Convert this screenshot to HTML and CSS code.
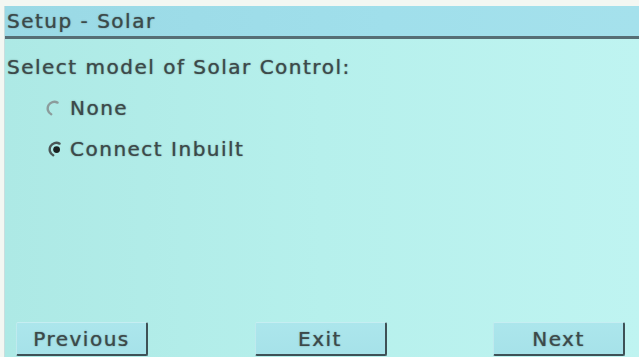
FILE: index.html
```html
<!DOCTYPE html>
<html>
<head>
<meta charset="utf-8">
<link rel="stylesheet" href="styles.css">
</head>
<body>
<div class="frame">
  <div class="screen">
    <div class="titlebar">Setup - Solar</div>
    <div class="content">
      <div class="prompt">Select model of Solar Control:</div>
      <div class="option">
        <svg class="radio" width="16" height="16" viewBox="0 0 16 16">
          <path d="M11.5 2.6 A6 6 0 1 0 5.2 14.3" fill="none" stroke="#8c9c9c" stroke-width="2.4" stroke-linecap="round"/>
        </svg>
        <span>None</span>
      </div>
      <div class="option checked">
        <svg class="radio" width="16" height="16" viewBox="0 0 16 16">
          <path d="M11.5 2.6 A6 6 0 1 0 5.2 14.3" fill="none" stroke="#4a5656" stroke-width="2.4" stroke-linecap="round"/>
          <circle cx="8.6" cy="8.6" r="3.4" fill="#1a2222"/>
        </svg>
        <span>Connect Inbuilt</span>
      </div>
    </div>
    <div class="footer">
      <div class="btn">Previous</div>
      <div class="btn">Exit</div>
      <div class="btn">Next</div>
    </div>
  </div>
</div>
</body>
</html>
```
FILE: styles.css
```css
html, body {
  margin: 0;
  padding: 0;
}
body {
  width: 639px;
  height: 357px;
  overflow: hidden;
  background: #f3f7f2;
  font-family: "DejaVu Sans", Verdana, sans-serif;
  font-size: 20px;
  line-height: 24px;
  letter-spacing: 1.5px;
  color: #3c4949;
  -webkit-text-stroke: 0.2px #3c4949;
}
.frame {
  height: 357px;
  display: flex;
  flex-direction: column;
  padding: 6px 0 0 4px;
  box-sizing: border-box;
}
.screen {
  flex: 1;
  display: flex;
  flex-direction: column;
  background: linear-gradient(90deg, #ade9e5 0%, #b6f0ec 50%, #bff4f1 100%);
  border-left: 1px solid #c8dede;
}
.titlebar {
  height: 33px;
  box-sizing: border-box;
  padding: 3px 0 0 2px;
  background: linear-gradient(90deg, #9ad9e5 0%, #a0dfeb 60%, #a5e1ec 100%);
  border-bottom: 3px solid #566e75;
  text-shadow: 0 0 1.5px rgba(50, 70, 70, 0.6);
}
.content {
  flex: 1;
  display: flex;
  flex-direction: column;
  gap: 17px;
  padding: 16px 0 0 2px;
  text-shadow: 0 0 1.5px rgba(50, 70, 70, 0.6);
}
.option {
  display: flex;
  align-items: center;
  gap: 8px;
  padding-left: 39px;
}
.option.checked {
  padding-left: 41px;
  gap: 6px;
}
.radio {
  flex: none;
}
.footer {
  display: flex;
  justify-content: space-between;
  padding: 0 14px 1px 11px;
}
.btn {
  width: 132px;
  height: 34px;
  box-sizing: border-box;
  display: flex;
  align-items: center;
  justify-content: center;
  background: linear-gradient(180deg, #acE6ec 0%, #a6e2e9 100%);
  border-top: 1px solid #c6eef2;
  border-left: 1px solid #bfeaee;
  border-right: 2px solid #3e5156;
  border-bottom: 2px solid #3e5156;
  border-radius: 2px;
  text-shadow: 0 0 1.5px rgba(50, 70, 70, 0.6);
}
```
